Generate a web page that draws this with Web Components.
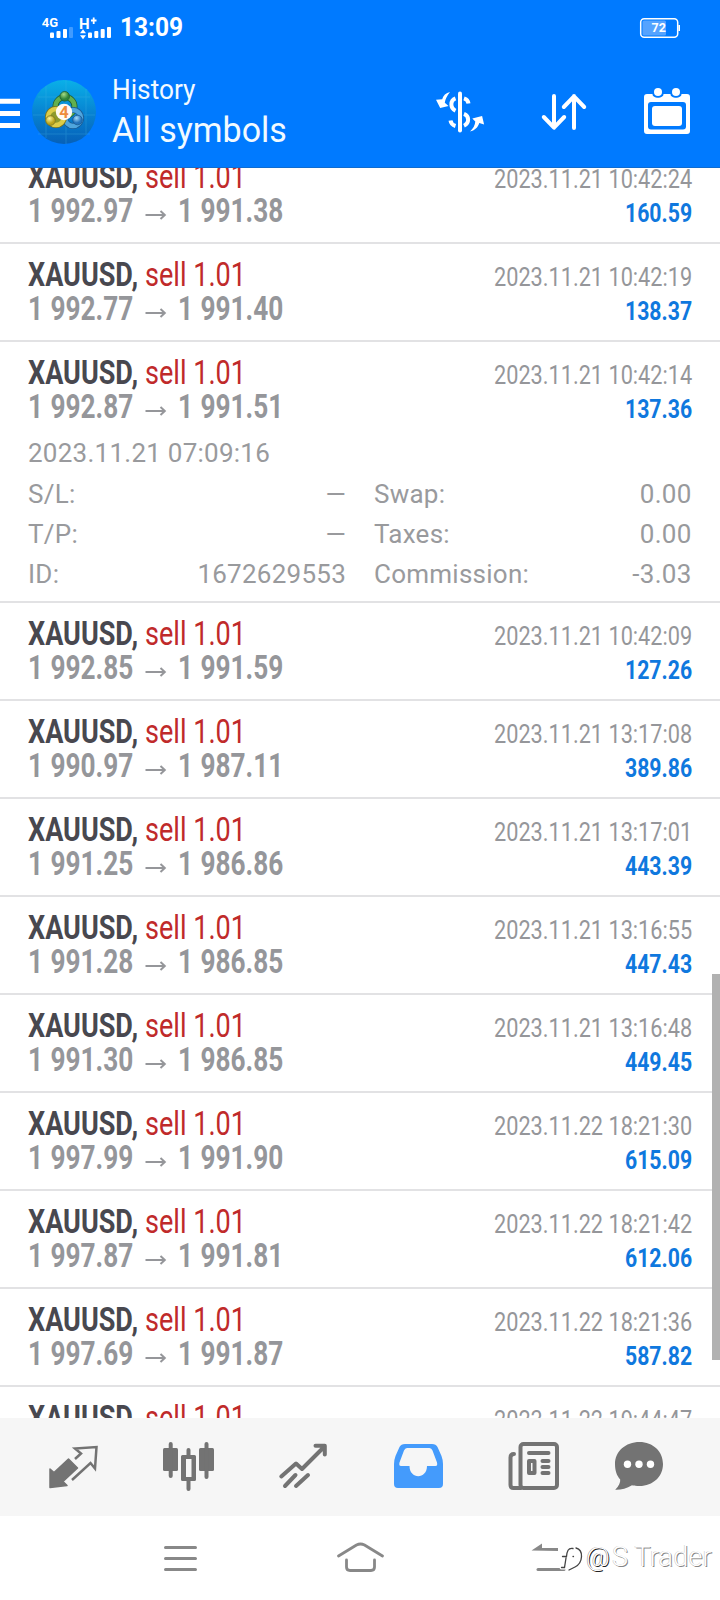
<!DOCTYPE html>
<html lang="en">
<head>
<meta charset="utf-8">
<title>History</title>
<style>
html,body{margin:0;padding:0;background:#fff}
body{width:720px;height:1600px;overflow:hidden;font-family:Roboto,"Liberation Sans",sans-serif}
</style>
</head>
<body>
<trade-app></trade-app>
<script>
const define = (name, html, setup) => customElements.define(name, class extends HTMLElement {
  connectedCallback() {
    if (this.shadowRoot) return;
    const root = this.attachShadow({mode: 'open'});
    root.innerHTML = typeof html === 'function' ? html(this) : html;
    if (setup) setup(this, root);
  }
});

// Narrow text: condenses its content horizontally by the "scale" attribute.
define('narrow-text', `<style>
:host{display:block;white-space:pre}
span{display:inline-block;transform-origin:0 0;white-space:pre}
</style><span><slot></slot></span>`, (el, root) => {
  const s = root.querySelector('span'), k = +el.getAttribute('scale');
  el.style.width = (s.getBoundingClientRect().width * k) + 'px';
  s.style.transform = `scaleX(${k})`;
});

define('status-bar', `<style>
:host{display:flex;height:56px;padding:0 40px 0 42px;justify-content:space-between;align-items:flex-start;box-sizing:border-box;color:#fff}
.l{display:flex}
svg{display:block}
.t{font-weight:700;font-size:25px;line-height:28px;margin:13.500px 0 0 7px}
.nets{width:71px;height:40px}
.bat{margin-top:17px}
text{font-family:Roboto,sans-serif;font-weight:700;fill:#fff}
</style>
<div class="l"><svg class="nets" width="71" height="40" viewBox="42 0 71 40" fill="#fff">
<text x="41.700" y="27" font-size="13">4G</text><text x="79" y="28.500" font-size="15">H</text>
<path d="M91 20.500h5.500M93.700 17.500v6.500" stroke="#fff" stroke-width="1.800"/>
<rect x="50" y="32.500" width="4" height="5.500" rx="1"/><rect x="56.500" y="31" width="4" height="7" rx="1"/><rect x="63" y="29" width="4" height="9" rx="1"/><rect x="69" y="27" width="4" height="11" rx="1" opacity=".25"/>
<path d="M80 33.200l3-4 3 4zM80 35.200h6l-3 4z"/>
<rect x="88" y="32.500" width="4" height="5.500" rx="1"/><rect x="94.300" y="31" width="4" height="7" rx="1"/><rect x="100.700" y="29" width="4" height="9" rx="1"/><rect x="107" y="27" width="4" height="11" rx="1"/>
</svg><div class="t"><narrow-text scale="0.98">13:09</narrow-text></div></div>
<svg class="bat" width="41" height="22" viewBox="639 17 41 22"><rect x="640.700" y="18.700" width="37" height="18.600" rx="3.500" fill="none" stroke="#fff" stroke-width="1.500"/><rect x="642.500" y="20.500" width="23.500" height="15" rx="1.500" fill="#55a3ff"/><path d="M679.200 25v6" stroke="#fff" stroke-width="1.600"/><text x="651.600" y="32.300" font-size="12.500">72</text></svg>`);

define('app-header', `<style>
:host{display:flex;height:112px;box-sizing:border-box;border-bottom:1.500px solid #0f6cd0;color:#f2faff;align-items:flex-start}
svg{display:block;flex:none}
.menu{margin-top:42px}.logo{margin:23px 0 0 11px}
.titles{margin-left:14.500px;flex:1}
.a{font-size:27px;line-height:32px;margin-top:18px}
.b{font-size:35px;line-height:40px;margin-top:5px}
.acts{display:flex;margin:30px 29px 0 0}
text{font-family:Roboto,sans-serif;font-weight:700}
</style>
<svg class="menu" width="20" height="31" viewBox="0 98 20 31"><path d="M0 101.300h20M0 113.500h20M0 125.500h20" stroke="#fff" stroke-width="5"/></svg>
<svg class="logo" width="66" height="66" viewBox="31 79 66 66">
<defs><linearGradient id="bg" x2="0" y2="1"><stop offset="0" stop-color="#0ab0e8"/><stop offset=".5" stop-color="#0784d2"/><stop offset="1" stop-color="#0660b8"/></linearGradient>
<radialGradient id="g" cx=".4" cy=".3"><stop offset="0" stop-color="#a6dc86"/><stop offset="1" stop-color="#2f8438"/></radialGradient>
<radialGradient id="y" cx=".4" cy=".3"><stop offset="0" stop-color="#fbf39a"/><stop offset="1" stop-color="#bba51f"/></radialGradient>
<radialGradient id="b" cx=".4" cy=".3"><stop offset="0" stop-color="#a5dcfa"/><stop offset="1" stop-color="#2373bd"/></radialGradient></defs>
<circle cx="64" cy="112" r="32" fill="url(#bg)"/>
<path d="M46 86v52M66 80v64M86 89v46M38 97h52M33 115h62M38 134h52" stroke="#48b8e8" stroke-width="1" opacity=".28"/>
<g fill="none"><circle cx="65" cy="106.500" r="9.500" stroke="#1f5d33" stroke-width="6"/><circle cx="65" cy="106.500" r="9.500" stroke="#62b04f" stroke-width="4.500"/><circle cx="73" cy="118" r="8" stroke="#1b5a93" stroke-width="6"/><circle cx="73" cy="118" r="8" stroke="#4fa5dd" stroke-width="4.500"/><circle cx="56" cy="117" r="8" stroke="#77711e" stroke-width="6"/><circle cx="56" cy="117" r="8" fill="#8f9a2c" stroke="#dccc48" stroke-width="4.500"/></g>
<g stroke-width=".8"><circle cx="64.700" cy="96.300" r="4.800" fill="url(#g)" stroke="#1f5d33"/><circle cx="50.500" cy="120.500" r="4.800" fill="url(#y)" stroke="#77711e"/><circle cx="77.500" cy="120" r="4.800" fill="url(#b)" stroke="#1b5a93"/></g>
<circle cx="64" cy="112" r="8.200" fill="#fffaf4"/><text x="59.200" y="118" font-size="16.500" fill="#ee8c3d">4</text></svg>
<div class="titles"><div class="a"><narrow-text scale="0.972">History</narrow-text></div><div class="b"><narrow-text scale="0.971">All symbols</narrow-text></div></div>
<div class="acts"><svg width="256" height="50" viewBox="435 86 256 50" fill="none" stroke="#fff">
<path d="M460 93.500v37" stroke-width="4" stroke-linecap="round"/>
<path d="M455.500 98.300c-5.500 2-5.500 10 0 12.500M464 98.300c2.600.8 4.200 2.700 4.500 5.200M464 113.800c5.500 2 5.500 9.500 0 12M455.500 126c-2.800-.8-4.600-2.800-5-5.500" stroke-width="4"/>
<g fill="#fff" stroke="none"><path d="M450 92c-4 1-7 3.500-7.800 7.200l-6.200.5 4.200 8.300 8.300-2-3.700-3.300c.5-3.500 2.200-7 5.200-10.700z"/><path d="M470 131.500c4.500-1 8-4 9.300-8.500l4.800 1.500-2-8.500-9.800 2.500 3 3c-.3 4-2.300 7-5.300 10z"/></g>
<path d="M554 96v31M543.800 117l10.200 10.700 10.200-10.700M574 128V96M563.800 107l10.200-10.700 10.200 10.700" stroke-width="4" stroke-linecap="round" stroke-linejoin="round"/>
<g fill="#fff" stroke="none"><path d="M647 94h5.500c0 5 11 5 11 0h7c0 5 11 5 11 0h5.500a3 3 0 0 1 3 3v34a3 3 0 0 1-3 3h-40a3 3 0 0 1-3-3V97a3 3 0 0 1 3-3zm4 8a3 3 0 0 0-3 3v21.500a3 3 0 0 0 3 3h32a3 3 0 0 0 3-3V105a3 3 0 0 0-3-3z" fill-rule="evenodd"/><rect x="652" y="106" width="30" height="20" rx="3"/><circle cx="658" cy="92" r="4"/><circle cx="676" cy="92" r="4"/></g>
</svg></div>`);

define('deal-row', el => {
  const a = n => el.getAttribute(n);
  return `<style>
:host{display:block;box-sizing:border-box;min-height:98px;padding:13.500px 28px 0;border-bottom:2px solid #e2e2e4;color:#95969a}
.line{display:flex;height:34px;line-height:34px;align-items:baseline}
.s{font-size:33px;font-weight:700;color:#48484f}
.k{font-size:33px;color:#c02a2a;margin-left:7px}
.p{font-size:33px;font-weight:700;word-spacing:1.200px}
.ar{align-self:center;margin:8px 11.500px 0 11.500px}
.d{font-size:26px;margin-left:auto}
.v{font-size:26px;font-weight:700;color:#0f78de;margin-left:auto}
</style>
<div class="line"><narrow-text class="s" scale="0.819">XAUUSD,</narrow-text><narrow-text class="k" scale="0.820">sell 1.01</narrow-text><narrow-text class="d" scale="0.835">${a('time')}</narrow-text></div>
<div class="line"><narrow-text class="p" scale="0.794">${a('open')}</narrow-text><svg class="ar" width="22" height="12" viewBox="0 0 22 12" fill="none" stroke="#95969a" stroke-width="2"><path d="M.500 6h19M15.500 2L19.800 6l-4.300 4"/></svg><narrow-text class="p" scale="0.794">${a('close')}</narrow-text><narrow-text class="v" scale="0.817">${a('profit')}</narrow-text></div><slot></slot>`;
});

define('deal-details', `<style>
:host{display:block;font-size:26px;letter-spacing:.250px;height:177.500px;line-height:40px;color:#999a9d}
.o{padding-top:9px;height:41px}
.g{display:grid;grid-template-columns:318px 317.500px;column-gap:28px;grid-auto-rows:40.400px;line-height:40.400px;width:663.500px}
.g div{display:flex;justify-content:space-between}
</style><div class="o">2023.11.21 07:09:16</div>
<div class="g"><div><span>S/L:</span><span>—</span></div><div><span>Swap:</span><span>0.00</span></div>
<div><span>T/P:</span><span>—</span></div><div><span>Taxes:</span><span>0.00</span></div>
<div><span>ID:</span><span>1672629553</span></div><div><span>Commission:</span><span>-3.03</span></div></div>`);

define('deal-list', () => {
  const rows = [
    ['10:42:24','1 992.97','1 991.38','160.59'],['10:42:19','1 992.77','1 991.40','138.37'],['10:42:14','1 992.87','1 991.51','137.36',1],
    ['10:42:09','1 992.85','1 991.59','127.26'],['13:17:08','1 990.97','1 987.11','389.86'],['13:17:01','1 991.25','1 986.86','443.39'],
    ['13:16:55','1 991.28','1 986.85','447.43'],['13:16:48','1 991.30','1 986.85','449.45'],['18:21:30','1 997.99','1 991.90','615.09'],
    ['18:21:42','1 997.87','1 991.81','612.06'],['18:21:36','1 997.69','1 991.87','587.82'],['19:44:47','','','']];
  return `<style>:host{display:block;height:1250px;overflow:hidden;position:relative}
.in{margin-top:-22px}.bar{position:absolute;right:0;top:806px;width:8px;height:386px;background:#b1b1b1}</style><div class="in">` +
  rows.map((r, i) => `<deal-row time="2023.11.${i > 7 ? 22 : 21} ${r[0]}" open="${r[1]}" close="${r[2]}" profit="${r[3]}">${r[4] ? '<deal-details></deal-details>' : ''}</deal-row>`).join('') + `</div><div class="bar"></div>`;
});

define('tab-bar', `<style>
:host{display:flex;height:98px;background:#f6f6f6;padding:20px 0 0 48px;box-sizing:border-box}
svg{display:block;flex:none;margin-right:63px}
svg:nth-of-type(3){margin-right:62px}svg:nth-of-type(4){margin-right:64px}svg:nth-of-type(5){margin-right:53px}
</style>
<svg width="52" height="54" viewBox="48 1438 52 54" fill="#737373"><path d="M50 1469l4 3.500 14.500-13.500 9 9-14.500 13.500 4 4-17 2z" stroke="#737373" stroke-width="1.500" stroke-linejoin="round"/><path d="M75 1459l6-5.500-6-5 21.500-1.500-1.500 21.500-4.500-5.500-18.500 17" fill="none" stroke="#737373" stroke-width="2.500"/></svg>
<svg width="52" height="54" viewBox="163 1438 52 54" fill="#737373"><rect x="163" y="1448" width="15" height="23" rx="1.500"/><rect x="199" y="1448" width="15" height="23" rx="1.500"/><path d="M170.700 1444v32M206.500 1444v33M188.500 1450v6M188.500 1480v9" stroke="#737373" stroke-width="4" stroke-linecap="round"/><path d="M181 1456.500a1.500 1.500 0 0 1 1.500-1.500h12a1.500 1.500 0 0 1 1.500 1.500v23a1.500 1.500 0 0 1-1.500 1.500h-12a1.500 1.500 0 0 1-1.500-1.500zM186 1459v18h5.500v-18z" fill-rule="evenodd"/></svg>
<svg width="52" height="54" viewBox="278 1438 52 54" fill="none" stroke="#737373" stroke-width="4" stroke-linecap="round" stroke-linejoin="round"><path d="M281.300 1476.500l14.700-13 6 5.500 22-22M315.500 1445.700h9.300v8.800M285 1486l10.500-11M296 1486l12-11"/></svg>
<svg width="52" height="54" viewBox="392 1438 52 54"><path d="M405 1444h27q4 0 5.500 3l4 9q1.500 4 1.500 8v20q0 4-4 4h-41q-4 0-4-4v-20q0-4 1.500-8l4-9q1.500-3 5.500-3zm2 4q-2 0-3 2.500l-4.500 12q-.8 3.500 1.500 3.500h8.500c0 13.500 17.500 13.500 17.500 0h8.500q2.300 0 1.500-3.500l-4.500-12q-1-2.500-3-2.500z" fill="#449bfc" fill-rule="evenodd"/></svg>
<svg width="52" height="54" viewBox="508 1438 52 54" fill="none" stroke="#737373" stroke-width="4" stroke-linecap="round" stroke-linejoin="round"><rect x="520.500" y="1444" width="36.500" height="44" rx="3"/><path d="M521 1488h-7.500q-3 0-3-3v-27.500q0-3.500 3.500-3.500M529 1453h19.500M542.500 1461h6M542.500 1467h6M542.500 1473h6"/><rect x="529" y="1461" width="5.500" height="12" /></svg>
<svg width="52" height="54" viewBox="613 1438 52 54"><path d="M639.500 1442c13.500 0 23.500 9.500 23.500 22s-10 22-23.500 22c-3.500 0-5-.2-7.500-.8-5.500 3.300-11 4.800-16.800 4.600 3.800-3.800 5.300-7.300 5-10.300-3.500-4-5.200-8.700-5.200-15.500 0-12.500 10.500-22 24.500-22z" fill="#737373"/><circle cx="627.500" cy="1464.300" r="3.700" fill="#fff"/><circle cx="639" cy="1464.300" r="3.700" fill="#fff"/><circle cx="650.500" cy="1464.300" r="3.700" fill="#fff"/></svg>`);

define('system-nav', `<style>
:host{display:flex;height:84px;position:relative;padding:20px 0 0 160px;box-sizing:border-box;background:#fff}
svg{display:block;flex:none}
.home{margin:0 140px 0 135px}
.wm{position:absolute;left:559px;top:24px;display:flex}
.wm span{font-size:27px;line-height:34px;color:#fff;text-shadow:1px 1px .5px #888,-.500px -.500px .5px #c4c4c4;white-space:pre;font-weight:300;letter-spacing:.2px}
.wm .at{font-size:26px;text-shadow:1px 1px .5px #222,-.500px -.500px .5px #888;margin-right:2px}
</style>
<svg width="41" height="40" viewBox="160 1536 41 40" stroke="#888" stroke-width="3" stroke-linecap="round"><path d="M165.500 1547.500h30M165.500 1558.500h30M165.500 1569.500h30"/></svg>
<svg class="home" width="50" height="40" viewBox="336 1536 50 40" fill="none" stroke="#888" stroke-width="2.800" stroke-linecap="round" stroke-linejoin="round"><path d="M338.500 1556l18-11q4-2 8 0l18 11M346.500 1560v7q0 3.500 3.500 3.500h21q3.500 0 3.500-3.500v-7"/></svg>
<svg width="40" height="40" viewBox="526 1536 40 40" fill="#888"><path d="M531.500 1550.500l10.500-7v4.500h16v3z"/><path d="M538 1569.500h26" stroke="#888" stroke-width="3" stroke-linecap="round"/></svg>
<div class="wm"><svg width="27" height="34" viewBox="559 1540 27 34" fill="none" stroke-linecap="round"><path d="M573 1548.500c-5-1-6 3-6.500 8h-4M566 1558l-1.500 9.500h-3M573 1556.500h.5M576 1548c8 2 7 15-1 19l-6 3" stroke="#fff" stroke-width="4"/><path d="M573 1548.500c-5-1-6 3-6.500 8h-4M566 1558l-1.500 9.500h-3M573 1556.500h.5M576 1548c8 2 7 15-1 19l-6 3" stroke="#444" stroke-width="1.300"/></svg><span class="at">@</span><span>S Trader</span></div>`);

define('trade-app', `<style>:host{display:flex;flex-direction:column;width:720px;height:1600px}.top{background:#007aff}</style>
<div class="top"><status-bar></status-bar><app-header></app-header></div><deal-list></deal-list><tab-bar></tab-bar><system-nav></system-nav>`);
</script>
</body>
</html>
